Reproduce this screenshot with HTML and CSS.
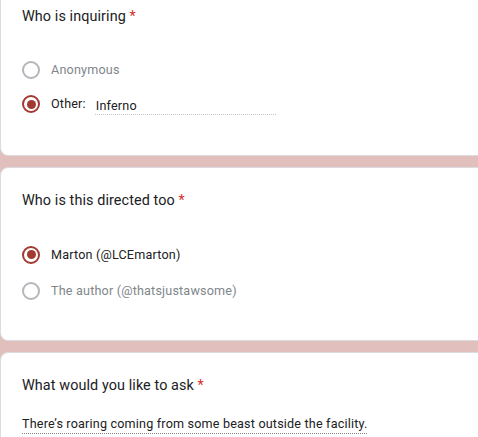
FILE: index.html
```html
<!DOCTYPE html>
<html lang="en">
<head>
<meta charset="utf-8">
<title>Form</title>
<link rel="stylesheet" href="styles.css">
</head>
<body>
  <div class="page">
    <section class="card card-first">
      <div class="title">Who is inquiring <span class="req">*</span></div>
      <div class="options options-first">
        <div class="option opt-a">
          <span class="radio"></span>
          <span class="label muted">Anonymous</span>
        </div>
        <div class="option opt-b">
          <span class="radio checked"></span>
          <span class="label">Other:</span>
          <span class="other-input">Inferno</span>
        </div>
      </div>
    </section>

    <section class="card card-second">
      <div class="title">Who is this directed too <span class="req">*</span></div>
      <div class="options options-second">
        <div class="option">
          <span class="radio checked"></span>
          <span class="label">Marton (@LCEmarton)</span>
        </div>
        <div class="option">
          <span class="radio"></span>
          <span class="label muted">The author (@thatsjustawsome)</span>
        </div>
      </div>
    </section>

    <section class="card card-third">
      <div class="title">What would you like to ask <span class="req">*</span></div>
      <div class="answer"><span class="answer-text">There’s roaring coming from some beast outside the facility.</span></div>
    </section>
  </div>
</body>
</html>
```

FILE: styles.css
```css
html, body {
  margin: 0;
  padding: 0;
}

body {
  background: #e1bfbd;
  font-family: Roboto, "Liberation Sans", Arial, sans-serif;
  color: #202124;
  overflow: hidden;
}

.page {
  display: flex;
  flex-direction: column;
  gap: 11px;
  width: 500px;
}

.card {
  background: #ffffff;
  border: 1px solid #dadce0;
  border-radius: 8px;
  padding: 21.6px 24px 30px 21px;
}

.card-first {
  margin-top: -17px;
  padding-bottom: 34px;
}

.card-second {
  padding-bottom: 31.5px;
}

.title {
  font-size: 14.4px;
  line-height: 21.6px;
  letter-spacing: 0.09px;
  color: #202124;
}

.req {
  color: #d93025;
}

.options {
  display: flex;
  flex-direction: column;
}

.options-first {
  margin-top: 25px;
}

.options-second {
  margin-top: 25.5px;
}

.option {
  display: flex;
  align-items: center;
  height: 36px;
}

.opt-a {
  height: 35px;
}

.opt-b {
  height: 34px;
}

.radio {
  box-sizing: border-box;
  width: 18px;
  height: 18px;
  border: 2px solid #b3b6bb;
  border-radius: 50%;
  margin-right: 11px;
  flex: none;
  display: flex;
  align-items: center;
  justify-content: center;
}

.radio.checked {
  border-color: #a13a30;
}

.radio.checked::after {
  content: "";
  width: 9px;
  height: 9px;
  border-radius: 50%;
  background: #a13a30;
}

.label {
  font-size: 12.6px;
  line-height: 18px;
  letter-spacing: 0.18px;
  color: #202124;
}

.label.muted {
  color: #80868b;
}

.other-input {
  margin-left: 9px;
  margin-top: 4px;
  width: 180px;
  font-size: 12.6px;
  line-height: 17px;
  letter-spacing: 0.18px;
  color: #202124;
  border-bottom: 1px dotted #c4c7cb;
  padding-left: 1px;
}

.answer {
  margin-top: 16px;
}

.answer-text {
  display: inline-block;
  font-size: 12.6px;
  line-height: 18px;
  letter-spacing: 0.18px;
  color: #202124;
  border-bottom: 1px dotted #80868b;
}
```
